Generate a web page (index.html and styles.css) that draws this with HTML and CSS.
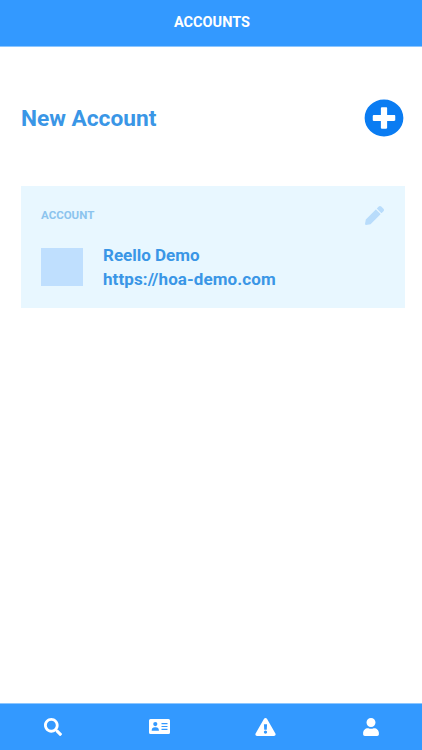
FILE: index.html
```html
<!DOCTYPE html>
<html lang="en">
<head>
    <meta charset="UTF-8">
    <meta name="viewport" content="width=device-width, initial-scale=1.0">
    <title>Accounts</title>
    <link rel="stylesheet" href="styles.css">
</head>
<body>

    <!-- Top Bar -->
    <header class="top-bar">
        <h1>ACCOUNTS</h1>
    </header>

    <main class="content">
        <!-- New Account Row -->
        <div class="new-account">
            <h2>New Account</h2>
            <svg class="add-icon" viewBox="0 0 512 512" preserveAspectRatio="none" aria-hidden="true">
                <path d="M256 8C119 8 8 119 8 256s111 248 248 248 248-111 248-248S393 8 256 8zm144 276c0 6.6-5.4 12-12 12h-92v92c0 6.6-5.4 12-12 12h-56c-6.6 0-12-5.4-12-12v-92h-92c-6.6 0-12-5.4-12-12v-56c0-6.6 5.4-12 12-12h92v-92c0-6.6 5.4-12 12-12h56c6.6 0 12 5.4 12 12v92h92c6.6 0 12 5.4 12 12v56z"/>
            </svg>
        </div>

        <!-- Account Card -->
        <section class="account-card">
            <div class="card-head">
                <h3>ACCOUNT</h3>
                <svg class="edit-icon" viewBox="0 0 512 512" aria-hidden="true">
                    <path d="M497.9 142.1l-46.1 46.1c-4.7 4.7-12.3 4.7-17 0l-111-111c-4.7-4.7-4.7-12.3 0-17l46.1-46.1c18.7-18.7 49.1-18.7 67.9 0l60.1 60.1c18.8 18.7 18.8 49.1 0 67.9zM284.2 99.8L21.6 362.4.4 483.9c-2.9 16.4 11.4 30.6 27.8 27.8l121.5-21.3 262.6-262.6c4.7-4.7 4.7-12.3 0-17l-111-111c-4.8-4.7-12.4-4.7-17.1 0z"/>
                </svg>
            </div>
            <div class="card-body">
                <div class="thumb"></div>
                <div class="card-text">
                    <p>Reello Demo</p>
                    <p class="card-url">https://hoa-demo.com</p>
                </div>
            </div>
        </section>
    </main>

    <!-- Bottom Nav -->
    <nav class="bottom-nav">
        <a class="nav-item">
            <svg class="icon-search" viewBox="0 0 512 512" aria-hidden="true">
                <path d="M505 442.7L405.3 343c-4.5-4.5-10.6-7-17-7H372c27.6-35.3 44-79.7 44-128C416 93.1 322.9 0 208 0S0 93.1 0 208s93.1 208 208 208c48.3 0 92.7-16.4 128-44v16.3c0 6.4 2.5 12.5 7 17l99.7 99.7c9.4 9.4 24.6 9.4 33.9 0l28.3-28.3c9.4-9.4 9.4-24.6.1-34zM208 336c-70.7 0-128-57.2-128-128 0-70.7 57.2-128 128-128 70.7 0 128 57.2 128 128 0 70.7-57.2 128-128 128z"/>
            </svg>
        </a>
        <a class="nav-item">
            <svg class="icon-card" viewBox="0 0 21 15" aria-hidden="true">
                <path fill-rule="evenodd" d="M1.5 0h18A1.5 1.5 0 0 1 21 1.500v12a1.500 1.500 0 0 1-1.500 1.500h-18A1.500 1.500 0 0 1 0 13.500v-12A1.500 1.500 0 0 1 1.500 0zM6.300 3a2.100 2.100 0 1 0 0 4.200 2.100 2.100 0 0 0 0-4.200zM2.700 11.200c0-1.800 1.200-3 3-3h1.200c1.800 0 3 1.200 3 3v.6H2.700zM12.500 4h6v1.200h-6zM12.500 6.900h6v1.200h-6zM12.500 9.800h6V11h-6z"/>
            </svg>
        </a>
        <a class="nav-item">
            <svg class="icon-alert" viewBox="0 0 576 512" aria-hidden="true">
                <path d="M569.517 440.013C587.975 472.007 564.806 512 527.94 512H48.054c-36.937 0-59.999-40.055-41.577-71.987L246.423 23.985c18.467-32.009 64.72-31.951 83.154 0l239.94 416.028zM288 354c-25.405 0-46 20.595-46 46s20.595 46 46 46 46-20.595 46-46-20.595-46-46-46zm-43.673-165.346l7.418 136c.347 6.364 5.609 11.346 11.982 11.346h48.546c6.373 0 11.635-4.982 11.982-11.346l7.418-136c.375-6.874-5.098-12.654-11.982-12.654h-63.383c-6.884 0-12.356 5.78-11.981 12.654z"/>
            </svg>
        </a>
        <a class="nav-item">
            <svg class="icon-user" viewBox="0 0 448 512" aria-hidden="true">
                <path d="M224 256c70.700 0 128-57.300 128-128S294.700 0 224 0 96 57.300 96 128s57.300 128 128 128zm89.600 32h-16.700c-22.200 10.200-46.900 16-72.900 16s-50.600-5.800-72.900-16h-16.700C60.200 288 0 348.200 0 422.400V464c0 26.500 21.500 48 48 48h352c26.500 0 48-21.500 48-48v-41.600c0-74.200-60.200-134.400-134.400-134.400z"/>
            </svg>
        </a>
    </nav>

</body>
</html>
```

FILE: styles.css
```css
/* Page */
* {
    box-sizing: border-box;
}

body {
    margin: 0;
    height: 100vh;
    display: flex;
    flex-direction: column;
    background: #fff;
    font-family: Roboto, "Liberation Sans", sans-serif;
    overflow: hidden;
}

/* Top Bar */
.top-bar {
    height: 47px;
    flex-shrink: 0;
    display: flex;
    align-items: center;
    justify-content: center;
    background: #3399ff;
    border-bottom: 1px solid #8cc6ff;
    padding: 0 0 2px 2px;
}

.top-bar h1 {
    margin: 0;
    font-size: 14.5px;
    font-weight: 700;
    color: #fff;
}

/* Content */
.content {
    flex: 1;
    padding: 52px 17px 0 21px;
}

.new-account {
    display: flex;
    align-items: center;
    justify-content: space-between;
    height: 38px;
    margin-bottom: 49px;
}

.new-account h2 {
    margin: 0;
    font-size: 22.7px;
    font-weight: 700;
    color: #3a96e6;
}

.add-icon {
    width: 40px;
    height: 38px;
    margin-right: 1px;
    fill: #0a7cf2;
}

/* Account Card */
.account-card {
    height: 122px;
    padding: 19px 21px 0 20px;
    background: #e8f7ff;
}

.card-head {
    display: flex;
    align-items: center;
    justify-content: space-between;
    height: 20px;
}

.card-head h3 {
    margin: 0;
    font-size: 11.5px;
    font-weight: 700;
    color: #8cc4ee;
}

.edit-icon {
    width: 19px;
    height: 19px;
    fill: #b8dcfb;
}

.card-body {
    display: flex;
    align-items: center;
    gap: 20px;
    margin-top: 18px;
}

.thumb {
    width: 42px;
    height: 38px;
    background: #bfdffe;
}

.card-text p {
    margin: 0;
    font-size: 17px;
    line-height: 24px;
    font-weight: 700;
    color: #3a96e6;
}

.card-text .card-url {
    letter-spacing: 0.1px;
}

/* Bottom Nav */
.bottom-nav {
    height: 47px;
    flex-shrink: 0;
    display: grid;
    grid-template-columns: repeat(4, 22px);
    column-gap: 84px;
    padding-left: 42px;
    background: #3399ff;
    border-top: 1px solid #8cc6ff;
}

.nav-item {
    display: flex;
    align-items: center;
    justify-content: center;
    padding-bottom: 1px;
}

.nav-item svg {
    fill: #fff;
}

.icon-search {
    width: 18px;
    height: 18px;
}

.icon-card {
    width: 21px;
    height: 15px;
}

.icon-alert {
    width: 21px;
    height: 18px;
}

.icon-user {
    width: 16px;
    height: 18px;
}
```
